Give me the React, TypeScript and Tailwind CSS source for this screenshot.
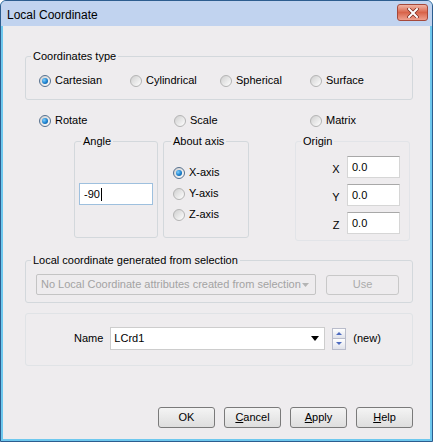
import React from 'react';

const font = { fontFamily: '"Liberation Sans", Arial, sans-serif' };

interface RadioProps {
  label: string;
  checked?: boolean;
  className?: string;
}

const Radio: React.FC<RadioProps> = ({ label, checked, className }) => (
  <div className={`flex items-center h-[13px] ${className ?? ''}`}>
    <span
      className={`flex items-center justify-center w-[12px] h-[12px] rounded-full border ${
        checked ? 'border-[#56708e]' : 'border-[#b4b4b4]'
      } bg-gradient-to-br from-[#cfcfcf] to-white`}
    >
      {checked && (
        <span className="w-[6px] h-[6px] rounded-full bg-[radial-gradient(circle_at_35%_35%,#7fd0ff,#1a7fcc_55%,#0a4f90)]" />
      )}
    </span>
    <span className="ml-[4px] leading-[13px]">{label}</span>
  </div>
);

const TextBox: React.FC<{ value: string; className?: string; caret?: boolean; focused?: boolean }> = ({
  value,
  className,
  caret,
  focused
}) => (
  <div
    className={`flex items-center bg-white h-[22px] pl-[4px] border ${
      focused ? 'border-[#9ec0de]' : 'border-[#d6d6d6] border-t-[#a8a8a8]'
    } ${className ?? ''}`}
  >
    <span className="leading-[13px]">{value}</span>
    {caret && <span className="w-px h-[13px] bg-black ml-px" />}
  </div>
);

const Legend: React.FC<{ text: string; className?: string }> = ({ text, className }) => (
  <legend className={`px-[2px] leading-[13px] ${className ?? ''}`}>{text}</legend>
);

const DialogButton: React.FC<{ children: React.ReactNode }> = ({ children }) => (
  <button className="w-[57px] h-[21px] rounded-[3px] border border-[#7a7a7a] bg-gradient-to-b from-[#f4f4f4] to-[#dedede] text-[11px] leading-[13px] text-black">
    {children}
  </button>
);

export default function App() {
  return (
    <div style={font} className="w-[433px] h-[442px] text-[11px] text-black border border-[#2d5d8f] rounded-t-[6px] overflow-hidden bg-[#6ec8ee] flex flex-col">
      {/* title bar */}
      <div className="h-[25px] shrink-0 bg-[#c1d3ef] flex items-center pl-[6px] pr-[4px]">
        <span className="text-[12px] leading-[14px] mt-[2px]">Local Coordinate</span>
        <div className="ml-auto mt-[-2px] w-[31px] h-[17px] rounded-[3px] border border-[#a5483a] bg-gradient-to-b from-[#efb4a6] via-[#d8644a] to-[#eea08e] flex items-center justify-center">
          <svg width="12" height="10" viewBox="0 0 12 10">
            <path d="M2 1 L10 9 M10 1 L2 9" stroke="#7a2a20" strokeWidth="3.4" strokeLinecap="square" />
            <path d="M2 1 L10 9 M10 1 L2 9" stroke="white" strokeWidth="2" strokeLinecap="square" />
          </svg>
        </div>
      </div>

      {/* body */}
      <div className="flex-1 mx-[2px] mb-[2px] bg-[#eeecee] pl-[22px] pr-[17px] pt-[24px] flex flex-col">
        {/* Coordinates type */}
        <fieldset className="border border-[#d3d8dc] rounded-[3px] w-[388px]">
          <Legend text="Coordinates type" className="ml-[5px]" />
          <div className="flex pl-[13px] pt-[11px] pb-[12px]">
            <Radio label="Cartesian" checked className="w-[91px]" />
            <Radio label="Cylindrical" className="w-[90px]" />
            <Radio label="Spherical" className="w-[90px]" />
            <Radio label="Surface" />
          </div>
        </fieldset>

        {/* transform type */}
        <div className="flex mt-[14px] pl-[14px]">
          <Radio label="Rotate" checked className="w-[135px]" />
          <Radio label="Scale" className="w-[136px]" />
          <Radio label="Matrix" />
        </div>

        {/* Angle / About axis / Origin */}
        <div className="flex items-start mt-[8px]">
          <fieldset className="ml-[49px] w-[84px] border border-[#d3d8dc] rounded-[3px]">
            <Legend text="Angle" className="ml-[6px]" />
            <div className="h-[89px] pl-[4px] pt-[35px]">
              <TextBox value="-90" caret focused className="w-[74px]" />
            </div>
          </fieldset>

          <fieldset className="ml-[5px] w-[86px] border border-[#d3d8dc] rounded-[3px]">
            <Legend text="About axis" className="ml-[7px]" />
            <div className="h-[89px] pl-[9px] pt-[18px] flex flex-col gap-[8px]">
              <Radio label="X-axis" checked />
              <Radio label="Y-axis" />
              <Radio label="Z-axis" />
            </div>
          </fieldset>

          <fieldset className="ml-[46px] w-[115px] border border-[#e2e4e8] rounded-[3px]">
            <Legend text="Origin" className="ml-[5px]" />
            <div className="h-[92px] pt-[8px] flex flex-col gap-[6px]">
              {['X', 'Y', 'Z'].map((axis) => (
                <div key={axis} className="flex items-center">
                  <span className="ml-[35px] w-[10px] text-center leading-[13px] mt-[4px]">{axis}</span>
                  <TextBox value="0.0" className="ml-[6px] w-[53px]" />
                </div>
              ))}
            </div>
          </fieldset>
        </div>

        {/* Local coordinate generated from selection */}
        <fieldset className="mt-[13px] w-[388px] border border-[#d3d8dc] rounded-[3px]">
          <Legend text="Local coordinate generated from selection" className="ml-[5px]" />
          <div className="flex items-center pl-[10px] pt-[7px] pb-[7px]">
            <div className="w-[280px] h-[21px] border border-[#c4c4c4] rounded-[2px] flex items-center pl-[4px] pr-[6px] text-[#a3a3a3]">
              <span className="leading-[13px]">No Local Coordinate attributes created from selection</span>
              <svg className="ml-auto" width="7" height="4" viewBox="0 0 7 4">
                <path d="M0 0 H7 L3.5 4 Z" fill="#b4b4b4" />
              </svg>
            </div>
            <div className="ml-[10px] w-[73px] h-[20px] border border-[#c8c8c8] rounded-[3px] flex items-center justify-center text-[#ababab]">
              Use
            </div>
          </div>
        </fieldset>

        {/* Name */}
        <div className="mt-[10px] w-[388px] border border-[#e0e3e6] rounded-[3px] pt-[13px] pb-[15px] pl-[48px] flex items-center">
          <span className="leading-[13px]">Name</span>
          <div className="ml-[7px] w-[215px] h-[23px] bg-white border border-[#cdcdcd] flex items-center pl-[3px] pr-[5px]">
            <span className="leading-[13px]">LCrd1</span>
            <svg className="ml-auto" width="8" height="5" viewBox="0 0 8 5">
              <path d="M0 0 H8 L4 5 Z" fill="#000" />
            </svg>
          </div>
          <div className="ml-[7px] w-[14px] h-[22px] flex flex-col">
            <div className="h-[11px] border border-[#b9bccb] bg-gradient-to-b from-white to-[#e0e2ea] flex items-center justify-center">
              <svg width="6" height="3" viewBox="0 0 6 3">
                <path d="M0 3 H6 L3 0 Z" fill="#4d6bc0" />
              </svg>
            </div>
            <div className="h-[11px] border border-t-0 border-[#b9bccb] bg-gradient-to-b from-white to-[#e0e2ea] flex items-center justify-center">
              <svg width="6" height="3" viewBox="0 0 6 3">
                <path d="M0 0 H6 L3 3 Z" fill="#4d6bc0" />
              </svg>
            </div>
          </div>
          <span className="ml-[7px] leading-[13px]">(new)</span>
        </div>

        {/* buttons */}
        <div className="mt-[41px] flex justify-end gap-[9px]">
          <DialogButton>OK</DialogButton>
          <DialogButton>
            <span className="underline">C</span>ancel
          </DialogButton>
          <DialogButton>
            <span className="underline">A</span>pply
          </DialogButton>
          <DialogButton>
            <span className="underline">H</span>elp
          </DialogButton>
        </div>
      </div>
    </div>
  );
}
